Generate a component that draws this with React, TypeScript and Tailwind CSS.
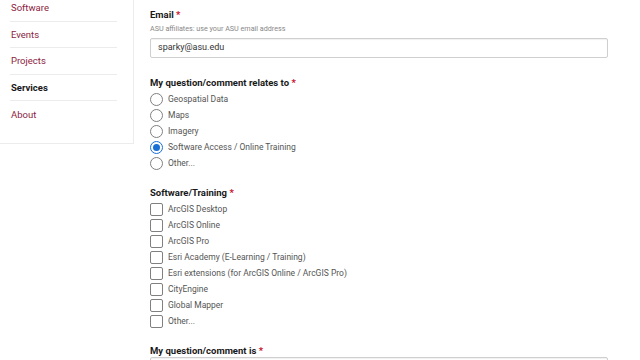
const navItems = [
  { label: 'Software', active: false },
  { label: 'Events', active: false },
  { label: 'Projects', active: false },
  { label: 'Services', active: true },
  { label: 'About', active: false },
];

const topics = ['Geospatial Data', 'Maps', 'Imagery', 'Software Access / Online Training', 'Other...'];

const software = [
  'ArcGIS Desktop',
  'ArcGIS Online',
  'ArcGIS Pro',
  'Esri Academy (E-Learning / Training)',
  'Esri extensions (for ArcGIS Online / ArcGIS Pro)',
  'CityEngine',
  'Global Mapper',
  'Other...',
];

function Label({ text }: { text: string }) {
  return (
    <div className="h-[12px] leading-[12px] text-[9.5px] font-bold text-[#191919]">
      {text} <span className="text-[#c8102e]">*</span>
    </div>
  );
}

function Radio({ label, checked }: { label: string; checked?: boolean }) {
  return (
    <div className="flex items-center h-[16px] gap-[5px]">
      {checked ? (
        <div className="w-[13px] h-[13px] rounded-full border-[1.5px] border-[#1a6fd6] flex items-center justify-center">
          <div className="w-[7px] h-[7px] rounded-full bg-[#1a6fd6]" />
        </div>
      ) : (
        <div className="w-[13px] h-[13px] rounded-full border border-[#808080] bg-white" />
      )}
      <span className="text-[8.5px] text-[#555]">{label}</span>
    </div>
  );
}

function Checkbox({ label }: { label: string }) {
  return (
    <div className="flex items-center h-[16px] gap-[5px]">
      <div className="w-[13px] h-[13px] rounded-[2px] border border-[#808080] bg-white" />
      <span className="text-[8.5px] text-[#555]">{label}</span>
    </div>
  );
}

export default function App() {
  return (
    <div className="w-[640px] h-[360px] overflow-hidden bg-white flex font-['Roboto',sans-serif]">
      {/* sidebar nav */}
      <div className="w-[134px] h-[149px] mt-[-5px] shrink-0 border-r border-b border-[#ececec] pl-[10px] pr-[16px] pb-[16px]">
        {navItems.map((item, i) => (
          <div
            key={item.label}
            className={`h-[26.5px] pt-[1px] flex items-center px-[1px] text-[9.5px] ${
              i < navItems.length - 1 ? 'border-b border-[#ececec]' : ''
            } ${item.active ? 'font-bold text-[#191919]' : 'text-[#8c1d40]'}`}
          >
            {item.label}
          </div>
        ))}
      </div>

      {/* form */}
      <div className="flex-1 pl-[16px] pr-[32px] pt-[9px]">
        <Label text="Email" />
        <div className="mt-[3px] h-[10px] leading-[10px] text-[7.2px] text-[#888]">
          ASU affiliates: use your ASU email address
        </div>
        <div className="mt-[4px] h-[20px] border border-[#cfcfcf] rounded-[2px] flex items-center px-[7px] text-[9px] text-[#333] shadow-[inset_0_1px_1px_rgba(0,0,0,0.06)]">
          sparky@asu.edu
        </div>

        <div className="mt-[19px]">
          <Label text="My question/comment relates to" />
        </div>
        <div className="mt-[2px] flex flex-col">
          {topics.map((t, i) => (
            <Radio key={t} label={t} checked={i === 3} />
          ))}
        </div>

        <div className="mt-[16px]">
          <Label text="Software/Training" />
        </div>
        <div className="mt-[2px] flex flex-col">
          {software.map((s) => (
            <Checkbox key={s} label={s} />
          ))}
        </div>

        <div className="mt-[16px]">
          <Label text="My question/comment is" />
        </div>
        <div className="h-[30px] border border-[#cfcfcf] rounded-[2px] shadow-[inset_0_1px_1px_rgba(0,0,0,0.06)]" />
      </div>
    </div>
  );
}
